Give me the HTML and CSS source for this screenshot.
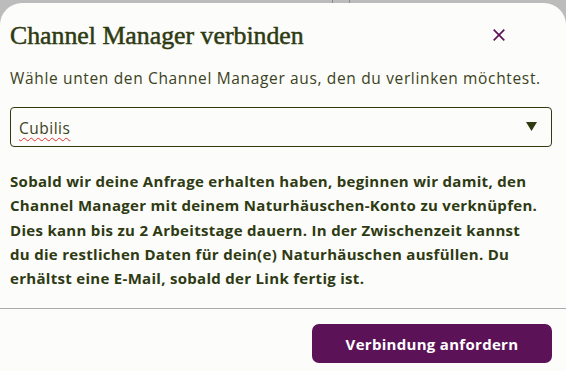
FILE: index.html
```html
<!DOCTYPE html>
<html lang="de">
<head>
<meta charset="utf-8">
<link rel="stylesheet" href="styles.css">
</head>
<body>
<div class="backdrop">
  <div class="bg-lines"><span class="bg-line"></span><span class="bg-line"></span></div>
  <div class="modal">
    <div class="modal-body">
      <div class="header">
        <h1 class="title">Channel Manager verbinden</h1>
        <button class="close" aria-label="Schließen">
          <svg width="12" height="12" viewBox="0 0 12 12"><path d="M0.7 0.7L11.3 11.3M11.3 0.7L0.7 11.3" stroke="#5c1457" stroke-width="1.7" fill="none"/></svg>
        </button>
      </div>
      <p class="subtitle">Wähle unten den Channel Manager aus, den du verlinken möchtest.</p>
      <div class="select">
        <span class="select-value">Cubilis</span>
        <svg class="caret" width="11" height="9" viewBox="0 0 11 9"><path d="M0 0H11L5.5 9Z" fill="#2f3a10"/></svg>
      </div>
      <p class="info">Sobald wir deine Anfrage erhalten haben, beginnen wir damit, den Channel Manager mit deinem Naturhäuschen-Konto zu verknüpfen. Dies kann bis zu 2 Arbeitstage dauern. In der Zwischenzeit kannst du die restlichen Daten für dein(e) Naturhäuschen ausfüllen. Du erhältst eine E-Mail, sobald der Link fertig ist.</p>
    </div>
    <div class="footer">
      <button class="primary">Verbindung anfordern</button>
    </div>
  </div>
</div>
</body>
</html>
```
FILE: styles.css
```css
* { box-sizing: border-box; }
html, body { margin: 0; padding: 0; }
body {
  width: 566px;
  height: 371px;
  overflow: hidden;
  background: #bcbcbc;
  font-family: "Open Sans", "Liberation Sans", sans-serif;
}
.backdrop {
  position: relative;
  height: 371px;
  padding-top: 3px;
}
.bg-lines {
  position: absolute;
  top: 0;
  left: 332px;
  display: flex;
  gap: 16px;
}
.bg-line {
  display: block;
  width: 1px;
  height: 3px;
  background: #8a8a8a;
}
.modal {
  position: relative;
  background: #fcfcfa;
  border-radius: 22px 22px 0 0;
  height: 368px;
  display: flex;
  flex-direction: column;
}
.modal-body {
  padding: 18px 14px 0 10px;
}
.header {
  display: flex;
  justify-content: space-between;
  align-items: center;
  height: 30px;
}
.title {
  margin: 0;
  font-family: "Liberation Serif", "DejaVu Serif", serif;
  font-weight: normal;
  font-size: 25.8px;
  color: #2e3a12;
  -webkit-text-stroke: 0.5px #2e3a12;
}
.close {
  border: 0;
  background: none;
  padding: 0;
  margin-right: 47px;
  margin-bottom: 3px;
  width: 12px;
  height: 12px;
  display: flex;
}
.subtitle {
  margin: 17px 0 0;
  font-size: 15.5px;
  letter-spacing: 0.65px;
  color: #3b4222;
  line-height: 20px;
}
.select {
  margin-top: 19px;
  width: 542px;
  height: 40px;
  border: 1px solid #343a10;
  border-radius: 4px;
  display: flex;
  align-items: center;
  justify-content: space-between;
  padding: 2px 14px 0 8px;
}
.select-value {
  font-size: 15.5px;
  letter-spacing: 0.5px;
  color: #3b4222;
  text-decoration: underline wavy #e5322d;
  text-decoration-thickness: 1px;
  text-underline-offset: 3px;
}
.caret { margin-top: -3px; }
.info {
  margin: 22px 0 0;
  width: 532px;
  font-size: 15px;
  font-weight: bold;
  letter-spacing: 0.3px;
  line-height: 24.3px;
  color: #2e3a12;
}
.footer {
  margin-top: 18px;
  border-top: 1px solid #ababab;
  padding: 15px 14px 0 0;
  display: flex;
  justify-content: flex-end;
}
.primary {
  width: 240px;
  height: 39px;
  border: 0;
  border-radius: 7px;
  background: #5c1257;
  color: #ffffff;
  font-family: "Open Sans", "Liberation Sans", sans-serif;
  font-weight: bold;
  font-size: 15px;
  letter-spacing: 0.3px;
}
```
